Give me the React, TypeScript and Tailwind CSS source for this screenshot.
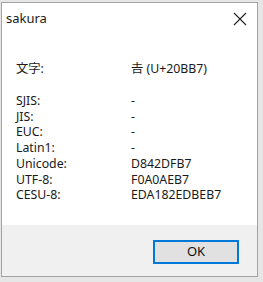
import React from "react";

const rows: [string, string][] = [
  ["SJIS:", "-"],
  ["JIS:", "-"],
  ["EUC:", "-"],
  ["Latin1:", "-"],
  ["Unicode:", "D842DFB7"],
  ["UTF-8:", "F0A0AEB7"],
  ["CESU-8:", "EDA182EDBEB7"],
];

export default function App() {
  return (
    <div
      className="w-[263px] h-[282px] bg-[#e6e6e6] pt-[2px] pl-[1px] overflow-hidden"
      style={{ fontFamily: '"Noto Sans", "Noto Sans CJK JP", sans-serif' }}
    >
      <div className="w-[257px] h-[275px] border border-[#a3a3a3] bg-white flex flex-col text-[#1a1a1a]">
        <div className="h-[31px] flex items-center justify-between pl-[4px] pr-[10px]">
          <span className="text-[13px]">sakura</span>
          <svg width="14" height="14" viewBox="0 0 14 14" className="text-[#222]">
            <path d="M1 1 L13 13 M13 1 L1 13" stroke="currentColor" strokeWidth="1.1" />
          </svg>
        </div>
        <div className="flex-1 pt-[27px] pl-[14px] text-[12.3px] leading-[15.75px]">
          <div className="grid grid-cols-[115px_1fr]">
            <span>文字:</span>
            <span>𠮷 (U+20BB7)</span>
          </div>
          <div className="grid grid-cols-[115px_1fr] mt-[16px]">
            {rows.map(([k, v]) => (
              <React.Fragment key={k}>
                <span>{k}</span>
                <span>{v}</span>
              </React.Fragment>
            ))}
          </div>
        </div>
        <div className="h-[51px] bg-[#f0f0f0] flex items-center justify-end pr-[18px] pt-[2px]">
          <button className="w-[86px] h-[24px] border-2 border-[#0078d7] bg-[#e1e1e1] text-[13px] text-[#111] flex items-center justify-center">
            OK
          </button>
        </div>
      </div>
    </div>
  );
}
